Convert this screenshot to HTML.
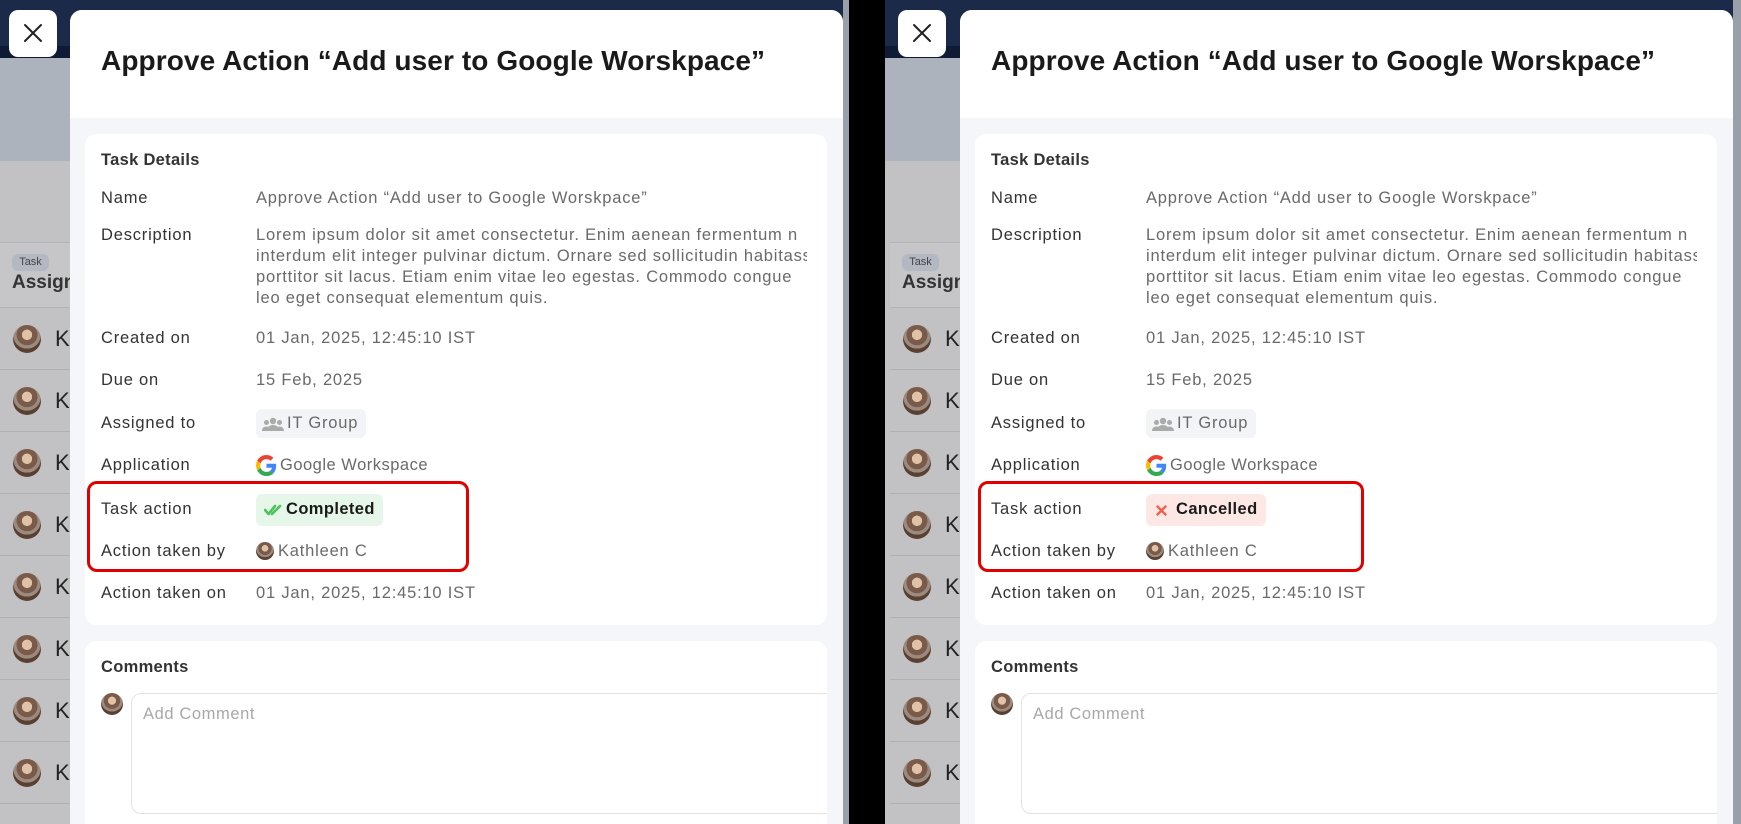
<!DOCTYPE html>
<html><head><meta charset="utf-8">
<style>
*{box-sizing:border-box;margin:0;padding:0}
body{width:1741px;height:824px;overflow:hidden;background:#000;font-family:"Liberation Sans",sans-serif;position:relative}
.panel{position:absolute;top:0;height:824px;overflow:hidden;background:#c2c2c4}
.band1{position:absolute;left:0;right:0;top:0;height:46px;background:#1c2a4a}
.band2{position:absolute;left:0;right:0;top:46px;height:12px;background:#0f1b35}
.band3{position:absolute;left:0;right:0;top:58px;height:103px;background:#adb3bd}
.thead{position:absolute;left:0;width:80px;top:242px;height:66px;background:#c6c6c8;border-top:1px solid #b4b4b6;border-bottom:1px solid #b4b4b6}
.chip{position:absolute;left:12px;top:254px;width:37px;height:17px;border-radius:6px;background:#b3b8c3;font-size:11px;color:#444;text-align:center;line-height:17px}
.assign{position:absolute;left:12px;top:272px;font-size:19px;font-weight:bold;color:#333}
.row{position:absolute;left:0;width:80px;height:62px;border-bottom:1px solid #b0b0b2}
.row .av{position:absolute;left:13px;top:17px;width:28px;height:28px}
.row span{position:absolute;left:55px;top:18px;font-size:22px;color:#222}
.av{border-radius:50%;background:radial-gradient(circle at 50% 35%,#e0c2a8 0 22%,#7a5a48 23% 45%,#9a8a80 46% 60%,#5a4030 61%)}
.close{position:absolute;width:48px;height:47px;background:#fff;border-radius:9px;top:10px}
.close svg{position:absolute;left:14px;top:13px}
.modal{position:absolute;top:10px;width:773px;height:814px;background:#f5f6fa;border-radius:12px 12px 0 0;overflow:hidden}
.mhead{position:absolute;left:0;right:0;top:0;height:108px;background:#fff}
.title{position:absolute;left:31px;top:35px;font-size:28px;font-weight:bold;color:#1a1a1a;letter-spacing:0.1px;white-space:nowrap}
.card{position:absolute;left:15px;width:742px;background:#fff;border-radius:11px;overflow:hidden}
.lab,.val,.pill{font-size:16.5px;letter-spacing:0.8px}
.lab{position:absolute;left:16px;color:#333;white-space:nowrap}
.val{position:absolute;left:171px;color:#6a6a6a;white-space:nowrap}
.h{font-weight:bold;color:#333;letter-spacing:0.3px}
.desc{line-height:21px;width:551px;overflow:hidden}
.pill{position:absolute;left:171px;border-radius:6px;white-space:nowrap}
.redbox{position:absolute;left:2px;width:382px;height:91px;border:3px solid #e00000;border-radius:10px}
.ta{position:absolute;left:46px;top:52px;width:760px;height:121px;border:1px solid #e3e3e6;border-radius:10px}
.ta span{position:absolute;left:11px;top:11px;font-size:16.5px;letter-spacing:0.6px;color:#a8a8a8}
</style></head><body>

<!-- LEFT PANEL -->
<div class="panel" style="left:0;width:849px">
 <div class="band1"></div><div class="band2"></div><div class="band3"></div>
 <div class="thead"></div><div class="chip">Task</div><div class="assign">Assign</div>
 <div class="row" style="top:308px"><div class="av"></div><span>K</span></div>
 <div class="row" style="top:370px"><div class="av"></div><span>K</span></div>
 <div class="row" style="top:432px"><div class="av"></div><span>K</span></div>
 <div class="row" style="top:494px"><div class="av"></div><span>K</span></div>
 <div class="row" style="top:556px"><div class="av"></div><span>K</span></div>
 <div class="row" style="top:618px"><div class="av"></div><span>K</span></div>
 <div class="row" style="top:680px"><div class="av"></div><span>K</span></div>
 <div class="row" style="top:742px"><div class="av"></div><span>K</span></div>
 <div style="position:absolute;left:843px;top:0;width:6px;height:824px;background:#9aa0aa"></div>
 <div class="close" style="left:9px"><svg width="20" height="20" viewBox="0 0 20 20"><path d="M2 2L18 18M18 2L2 18" stroke="#222" stroke-width="2" stroke-linecap="round"/></svg></div>
 <div class="modal" style="left:70px">
  <div class="mhead"><div class="title">Approve Action “Add user to Google Worskpace”</div></div>
  <div class="card" style="top:124px;height:491px">
   <div class="lab h" style="top:17px">Task Details</div>
   <div class="lab" style="top:55px">Name</div><div class="val" style="top:55px">Approve Action “Add user to Google Worskpace”</div>
   <div class="lab" style="top:92px">Description</div>
   <div class="val desc" style="top:91px">Lorem ipsum dolor sit amet consectetur. Enim aenean fermentum n<br>interdum elit integer pulvinar dictum. Ornare sed sollicitudin habitasse<br>porttitor sit lacus. Etiam enim vitae leo egestas. Commodo congue<br>leo eget consequat elementum quis.</div>
   <div class="lab" style="top:195px">Created on</div><div class="val" style="top:195px">01 Jan, 2025, 12:45:10 IST</div>
   <div class="lab" style="top:237px">Due on</div><div class="val" style="top:237px">15 Feb, 2025</div>
   <div class="lab" style="top:280px">Assigned to</div>
   <div class="pill" style="top:275px;height:29px;background:#f3f4f7;color:#6a6a6a;padding:5px 8px 0 31px">IT Group
    <svg style="position:absolute;left:6px;top:8px" width="22" height="14" viewBox="0 0 22 14"><circle cx="11" cy="4" r="3.2" fill="#aaa"/><circle cx="4.5" cy="5.5" r="2.5" fill="#aaa"/><circle cx="17.5" cy="5.5" r="2.5" fill="#aaa"/><path d="M5 14c0-4 2.5-6 6-6s6 2 6 6z" fill="#aaa"/><path d="M0 14c0-3 2-4.5 4.5-4.5S8 11 8 14z" fill="#aaa"/><path d="M14 14c0-3 1.5-4.5 3.5-4.5S22 11 22 14z" fill="#aaa"/></svg></div>
   <div class="lab" style="top:322px">Application</div>
   <div class="val" style="top:322px;padding-left:24px;letter-spacing:0.5px">Google Workspace
    <svg style="position:absolute;left:0;top:-1px" width="21" height="21" viewBox="0 0 48 48"><path fill="#EA4335" d="M24 9.5c3.5 0 6.6 1.2 9.1 3.6l6.8-6.8C35.8 2.5 30.3 0 24 0 14.6 0 6.6 5.4 2.6 13.2l7.9 6.2C12.4 13.7 17.7 9.5 24 9.5z"/><path fill="#4285F4" d="M46.1 24.5c0-1.6-.1-3.1-.4-4.5H24v9h12.4c-.5 2.900-2.2 5.300-4.600 7l7.5 5.8c4.4-4 6.8-10 6.8-17.3z"/><path fill="#FBBC05" d="M10.5 28.6c-.5-1.4-.8-3-.8-4.6s.3-3.2.8-4.6l-7.9-6.2C.9 16.6 0 20.2 0 24s.9 7.4 2.6 10.8z"/><path fill="#34A853" d="M24 48c6.5 0 11.9-2.1 15.9-5.8l-7.5-5.8c-2.1 1.4-4.8 2.3-8.4 2.3-6.3 0-11.6-4.2-13.5-9.9l-7.9 6.2C6.6 42.6 14.6 48 24 48z"/></svg></div>
   <div class="redbox" style="top:347px"></div>
   <div class="lab" style="top:366px">Task action</div>
   <div class="pill" style="top:360px;height:32px;background:#e6f6e8;color:#1a1a1a;padding:6px 8px 0 30px;font-weight:bold;letter-spacing:0.4px">Completed
    <svg style="position:absolute;left:8px;top:10px" width="18" height="12" viewBox="0 0 18 12"><path d="M1 6l3.5 4L11 2" stroke="#4cc35a" stroke-width="2.6" fill="none" stroke-linecap="round" stroke-linejoin="round"/><path d="M8 10L16 2" stroke="#4cc35a" stroke-width="2.6" fill="none" stroke-linecap="round"/></svg></div>
   <div class="lab" style="top:408px">Action taken by</div>
   <div class="val" style="top:408px;padding-left:22px">Kathleen C<div class="av" style="position:absolute;left:0;top:0;width:18px;height:18px"></div></div>
   <div class="lab" style="top:450px">Action taken on</div><div class="val" style="top:450px">01 Jan, 2025, 12:45:10 IST</div>
  </div>
  <div class="card" style="top:631px;height:200px">
   <div class="lab h" style="top:17px">Comments</div>
   <div class="av" style="position:absolute;left:16px;top:52px;width:22px;height:22px"></div>
   <div class="ta"><span>Add Comment</span></div>
  </div>
 </div>
</div>

<!-- RIGHT PANEL -->
<div class="panel" style="left:885px;width:856px">
 <div class="band1"></div><div class="band2"></div><div class="band3"></div>
 <div class="thead" style="left:5px"></div><div class="chip" style="left:17px">Task</div><div class="assign" style="left:17px">Assign</div>
 <div class="row" style="top:308px;left:5px"><div class="av"></div><span>K</span></div>
 <div class="row" style="top:370px;left:5px"><div class="av"></div><span>K</span></div>
 <div class="row" style="top:432px;left:5px"><div class="av"></div><span>K</span></div>
 <div class="row" style="top:494px;left:5px"><div class="av"></div><span>K</span></div>
 <div class="row" style="top:556px;left:5px"><div class="av"></div><span>K</span></div>
 <div class="row" style="top:618px;left:5px"><div class="av"></div><span>K</span></div>
 <div class="row" style="top:680px;left:5px"><div class="av"></div><span>K</span></div>
 <div class="row" style="top:742px;left:5px"><div class="av"></div><span>K</span></div>
 <div style="position:absolute;left:848px;top:0;width:8px;height:824px;background:#9aa0aa"></div>
 <div class="close" style="left:13px"><svg width="20" height="20" viewBox="0 0 20 20"><path d="M2 2L18 18M18 2L2 18" stroke="#222" stroke-width="2" stroke-linecap="round"/></svg></div>
 <div class="modal" style="left:75px">
  <div class="mhead"><div class="title">Approve Action “Add user to Google Worskpace”</div></div>
  <div class="card" style="top:124px;height:491px">
   <div class="lab h" style="top:17px">Task Details</div>
   <div class="lab" style="top:55px">Name</div><div class="val" style="top:55px">Approve Action “Add user to Google Worskpace”</div>
   <div class="lab" style="top:92px">Description</div>
   <div class="val desc" style="top:91px">Lorem ipsum dolor sit amet consectetur. Enim aenean fermentum n<br>interdum elit integer pulvinar dictum. Ornare sed sollicitudin habitasse<br>porttitor sit lacus. Etiam enim vitae leo egestas. Commodo congue<br>leo eget consequat elementum quis.</div>
   <div class="lab" style="top:195px">Created on</div><div class="val" style="top:195px">01 Jan, 2025, 12:45:10 IST</div>
   <div class="lab" style="top:237px">Due on</div><div class="val" style="top:237px">15 Feb, 2025</div>
   <div class="lab" style="top:280px">Assigned to</div>
   <div class="pill" style="top:275px;height:29px;background:#f3f4f7;color:#6a6a6a;padding:5px 8px 0 31px">IT Group
    <svg style="position:absolute;left:6px;top:8px" width="22" height="14" viewBox="0 0 22 14"><circle cx="11" cy="4" r="3.2" fill="#aaa"/><circle cx="4.5" cy="5.5" r="2.5" fill="#aaa"/><circle cx="17.5" cy="5.5" r="2.5" fill="#aaa"/><path d="M5 14c0-4 2.5-6 6-6s6 2 6 6z" fill="#aaa"/><path d="M0 14c0-3 2-4.5 4.5-4.5S8 11 8 14z" fill="#aaa"/><path d="M14 14c0-3 1.5-4.5 3.5-4.5S22 11 22 14z" fill="#aaa"/></svg></div>
   <div class="lab" style="top:322px">Application</div>
   <div class="val" style="top:322px;padding-left:24px;letter-spacing:0.5px">Google Workspace
    <svg style="position:absolute;left:0;top:-1px" width="21" height="21" viewBox="0 0 48 48"><path fill="#EA4335" d="M24 9.5c3.5 0 6.6 1.2 9.1 3.6l6.8-6.8C35.8 2.5 30.3 0 24 0 14.6 0 6.6 5.4 2.6 13.2l7.9 6.2C12.4 13.7 17.7 9.5 24 9.5z"/><path fill="#4285F4" d="M46.1 24.5c0-1.6-.1-3.1-.4-4.5H24v9h12.4c-.5 2.9-2.2 5.3-4.6 7l7.5 5.8c4.4-4 6.8-10 6.8-17.3z"/><path fill="#FBBC05" d="M10.5 28.6c-.5-1.4-.8-3-.8-4.6s.3-3.2.8-4.6l-7.9-6.2C.9 16.6 0 20.2 0 24s.9 7.4 2.6 10.8z"/><path fill="#34A853" d="M24 48c6.5 0 11.9-2.1 15.9-5.8l-7.5-5.8c-2.1 1.4-4.8 2.3-8.4 2.3-6.3 0-11.6-4.2-13.5-9.9l-7.9 6.2C6.6 42.6 14.6 48 24 48z"/></svg></div>
   <div class="redbox" style="top:347px;left:3px;width:386px"></div>
   <div class="lab" style="top:366px">Task action</div>
   <div class="pill" style="top:360px;height:32px;background:#fde8e6;color:#1a1a1a;padding:6px 8px 0 30px;font-weight:bold;letter-spacing:0.4px">Cancelled
    <svg style="position:absolute;left:10px;top:11px" width="11" height="11" viewBox="0 0 11 11"><path d="M1.5 1.5L9.5 9.5M9.5 1.5L1.5 9.5" stroke="#f0604d" stroke-width="2.4" stroke-linecap="round"/></svg></div>
   <div class="lab" style="top:408px">Action taken by</div>
   <div class="val" style="top:408px;padding-left:22px">Kathleen C<div class="av" style="position:absolute;left:0;top:0;width:18px;height:18px"></div></div>
   <div class="lab" style="top:450px">Action taken on</div><div class="val" style="top:450px">01 Jan, 2025, 12:45:10 IST</div>
  </div>
  <div class="card" style="top:631px;height:200px">
   <div class="lab h" style="top:17px">Comments</div>
   <div class="av" style="position:absolute;left:16px;top:52px;width:22px;height:22px"></div>
   <div class="ta"><span>Add Comment</span></div>
  </div>
 </div>
</div>
</body></html>
